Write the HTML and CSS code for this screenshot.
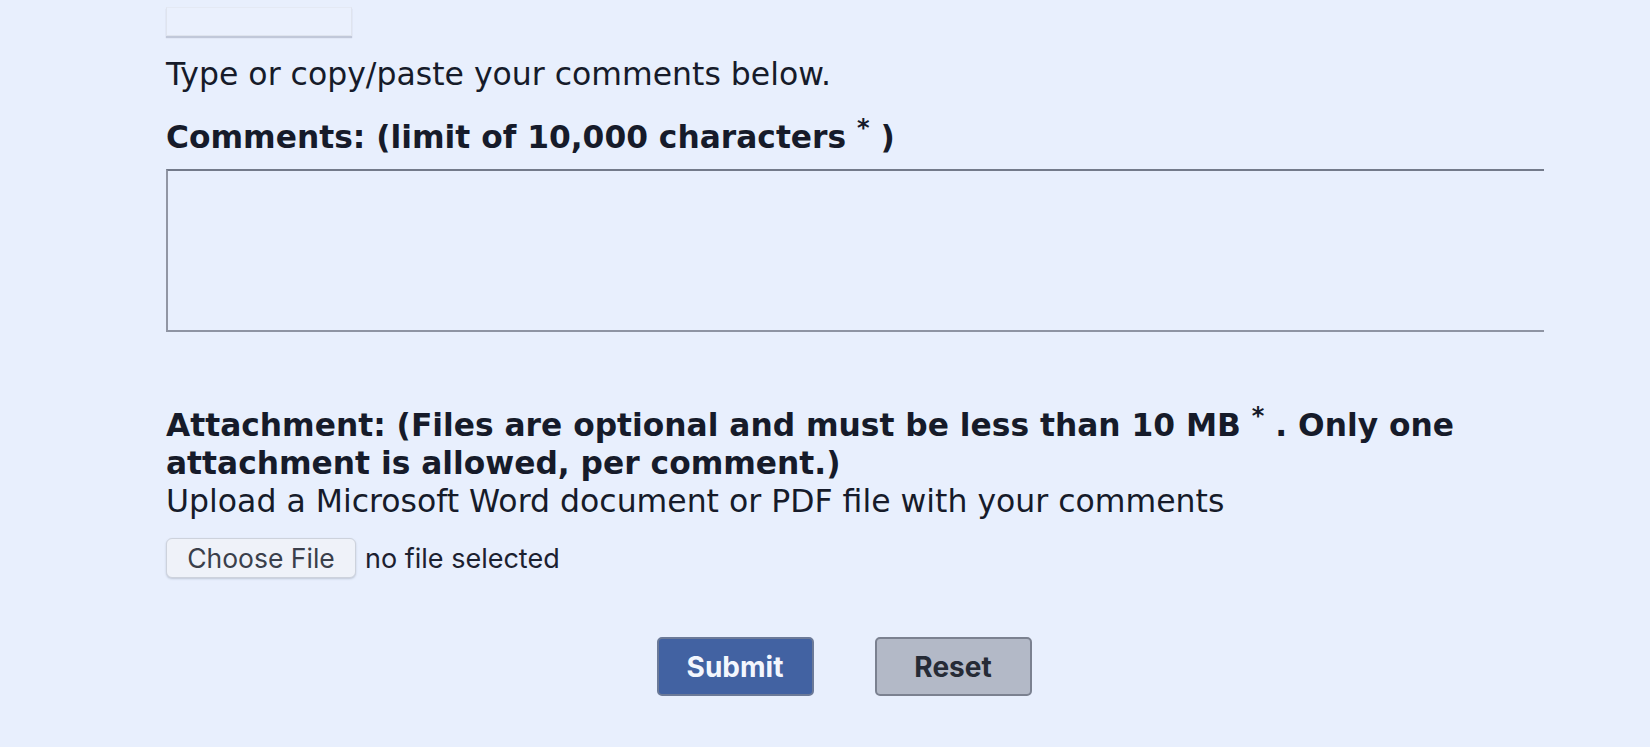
FILE: index.html
```html
<!DOCTYPE html>
<html lang="en">
<head>
<meta charset="utf-8">
<title>Comment form</title>
<link rel="stylesheet" href="styles.css">
</head>
<body>
<form class="form">
  <div class="topbox"></div>
  <p class="instr">Type or copy/paste your comments below.</p>
  <p class="label">Comments: (limit of 10,000 characters <sup class="req">*</sup> )</p>
  <div class="ta-wrap"><textarea class="ta"></textarea></div>
  <p class="label attach">Attachment: (Files are optional and must be less than 10 MB <sup class="req">*</sup> . Only one attachment is allowed, per comment.)</p>
  <p class="instr upload">Upload a Microsoft Word document or PDF file with your comments</p>
  <div class="file-row">
    <button type="button" class="choose">Choose File</button>
    <span class="nofile">no file selected</span>
  </div>
  <div class="actions">
    <button type="button" class="btn submit">Submit</button>
    <button type="button" class="btn reset">Reset</button>
  </div>
</form>
</body>
</html>
```

FILE: styles.css
```css
html, body {
  margin: 0;
  padding: 0;
  background: #e8effd;
}
body {
  font-family: "DejaVu Sans", Verdana, sans-serif;
  color: #161b2a;
  overflow: hidden;
}
.form {
  padding-left: 166px;
  width: 1356px;
}
.topbox {
  width: 184px;
  height: 27px;
  margin-top: 7px;
  background: #eaf0fd;
  border: 1px solid #dfe4ee;
  border-top-color: #e4e9f4;
  box-shadow: 0 2px 1px rgba(120, 130, 150, 0.35);
}
.instr {
  margin: 19px 0 0;
  font-size: 31.5px;
  line-height: 38px;
}
.label {
  margin: 25px 0 0;
  font-size: 31.3px;
  font-weight: bold;
  line-height: 38px;
}
.req {
  font-size: 24px;
  line-height: 0;
  vertical-align: 12px;
}
.ta-wrap {
  margin-top: 13px;
  width: 1378px;
  overflow: hidden;
}
.ta {
  display: block;
  width: 1500px;
  height: 159px;
  margin: 0;
  padding: 0;
  resize: none;
  background: #e8effd;
  border-style: solid;
  border-width: 2px;
  border-color: #737a8a #a0a5b2 #8e94a3 #9196a4;
  box-sizing: content-box;
}
.attach {
  margin-top: 74px;
}
.upload {
  margin-top: 0;
}
.file-row {
  display: flex;
  align-items: center;
  gap: 9px;
  margin-top: 18px;
  font-family: Inter, "Noto Sans", sans-serif;
}
.choose {
  width: 190px;
  height: 40px;
  padding: 0;
  font-family: Inter, "Noto Sans", sans-serif;
  font-size: 26.5px;
  color: #3a3f4b;
  background: #eff2f9;
  border: 1px solid #cdd2dc;
  border-radius: 6px;
  box-shadow: 0 1px 2px rgba(100, 110, 130, 0.3);
}
.nofile {
  font-size: 27px;
  color: #1c2130;
}
.actions {
  display: flex;
  justify-content: center;
  gap: 61px;
  margin-top: 59px;
}
.btn {
  width: 157px;
  height: 59px;
  padding: 0;
  font-family: Inter, "Noto Sans", sans-serif;
  font-size: 28px;
  font-weight: bold;
  border: 2px solid #7b8190;
  border-radius: 5px;
}
.submit {
  background: #4262a2;
  color: #f3f6fd;
  border-color: #6c7a98;
}
.reset {
  background: #b3b9c7;
  color: #262b36;
}
```
